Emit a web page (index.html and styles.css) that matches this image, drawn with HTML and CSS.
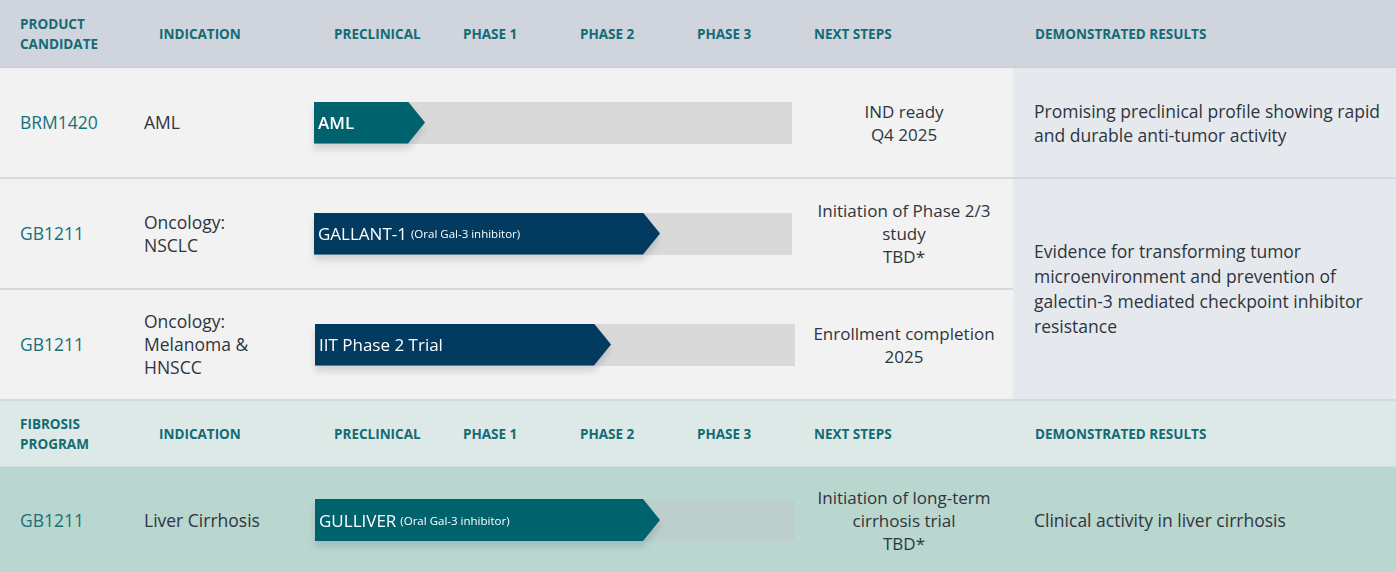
FILE: index.html
```html
<!DOCTYPE html>
<html lang="en">

<head>
    <meta charset="UTF-8">
    <meta name="viewport" content="width=device-width, initial-scale=1.0">
    <title>Pipeline</title>
    <link rel="stylesheet" href="styles.css">
</head>

<body>
    <!-- Oncology header -->
    <div class="head">
        <div class="h-product">PRODUCT<br>CANDIDATE</div>
        <div class="h-ind">INDICATION</div>
        <div class="h-pre">PRECLINICAL</div>
        <div class="h-ph">PHASE 1</div>
        <div class="h-ph">PHASE 2</div>
        <div class="h-ph">PHASE 3</div>
        <div class="h-next">NEXT STEPS</div>
        <div class="h-res">DEMONSTRATED RESULTS</div>
    </div>

    <div class="grid onc">
        <!-- BRM1420 -->
        <div class="cell product">BRM1420</div>
        <div class="cell ind">AML</div>
        <div class="cell bar">
            <div class="track">
                <div class="shadow">
                    <div class="arrow teal bold" style="width: 111px">AML</div>
                </div>
            </div>
        </div>
        <div class="cell next">IND ready<br>Q4 2025</div>
        <div class="cell res">Promising preclinical profile showing rapid and durable anti-tumor activity</div>

        <!-- GB1211 NSCLC -->
        <div class="cell product">GB1211</div>
        <div class="cell ind">Oncology:<br>NSCLC</div>
        <div class="cell bar">
            <div class="track">
                <div class="shadow">
                    <div class="arrow navy" style="width: 346px">GALLANT-1 <small>(Oral Gal-3 inhibitor)</small></div>
                </div>
            </div>
        </div>
        <div class="cell next">Initiation of Phase 2/3<br>study<br>TBD*</div>
        <div class="cell res span">Evidence for transforming tumor microenvironment and prevention of galectin-3 mediated checkpoint inhibitor resistance</div>

        <!-- GB1211 Melanoma -->
        <div class="cell product">GB1211</div>
        <div class="cell ind">Oncology:<br>Melanoma &amp;<br>HNSCC</div>
        <div class="cell bar">
            <div class="track shift">
                <div class="shadow">
                    <div class="arrow navy" style="width: 296px">IIT Phase 2 Trial</div>
                </div>
            </div>
        </div>
        <div class="cell next">Enrollment completion<br>2025</div>
    </div>

    <!-- Fibrosis header -->
    <div class="head fib">
        <div class="h-product">FIBROSIS<br>PROGRAM</div>
        <div class="h-ind">INDICATION</div>
        <div class="h-pre">PRECLINICAL</div>
        <div class="h-ph">PHASE 1</div>
        <div class="h-ph">PHASE 2</div>
        <div class="h-ph">PHASE 3</div>
        <div class="h-next">NEXT STEPS</div>
        <div class="h-res">DEMONSTRATED RESULTS</div>
    </div>

    <div class="grid fib-row">
        <div class="cell product">GB1211</div>
        <div class="cell ind">Liver Cirrhosis</div>
        <div class="cell bar">
            <div class="track shift green">
                <div class="shadow">
                    <div class="arrow teal" style="width: 345px">GULLIVER <small>(Oral Gal-3 inhibitor)</small></div>
                </div>
            </div>
        </div>
        <div class="cell next">Initiation of long-term<br>cirrhosis trial<br>TBD*</div>
        <div class="cell res">Clinical activity in liver cirrhosis</div>
    </div>
</body>

</html>
```

FILE: styles.css
```css
body {
    margin: 0;
    font-family: "Open Sans", Arial, sans-serif;
    color: #2e353d;
    background-color: #f2f2f2;
    width: 1396px;
    height: 572px;
    overflow: hidden;
}

/* header rows */
.head {
    display: flex;
    align-items: center;
    height: 67px;
    background-color: #d0d4dd;
    border-bottom: 1px solid #c7ccd5;
    color: #136b74;
    font-weight: bold;
    font-size: 13.5px;
    line-height: 20px;
}

.head.fib {
    height: 65px;
    background-color: #dde9e6;
    border-top: 2px solid #d5d9e0;
    border-bottom: 1px solid #cfdedb;
}

.h-product {
    width: 139px;
    padding-left: 20px;
}

.h-ind {
    width: 175px;
}

.h-pre {
    width: 129px;
}

.h-ph {
    width: 117px;
}

.h-next {
    width: 221px;
}

/* body grid */
.grid {
    display: grid;
    grid-template-columns: 144px 170px 481px 218px 1fr;
    font-size: 17.5px;
    line-height: 23px;
}

.onc {
    grid-template-rows: 109px 109px 109px;
    row-gap: 2px;
    background-color: #d5d9e0;
}

.fib-row {
    grid-template-rows: 106px;
    background-color: #b9d6cf;
}

.cell {
    display: flex;
    align-items: center;
    background-color: #f2f2f2;
}

.fib-row .cell {
    background-color: #b9d6cf;
}

.product {
    padding-left: 20px;
    color: #16707a;
}

.next {
    justify-content: center;
    text-align: center;
    font-size: 17px;
}

.res {
    background-color: #e5e9ee;
    padding-left: 21px;
    padding-right: 8px;
    line-height: 24px;
}

.res.span {
    grid-column: 5;
    grid-row: 2 / span 2;
    line-height: 25px;
}

.fib-row .res {
    background-color: #b9d6cf;
}

/* pipeline bars */
.track {
    width: 478px;
    height: 42px;
    background-color: #d9d9d9;
}

.track.shift {
    margin-left: 1px;
    width: 480px;
}

.track.green {
    background-color: #bdcfca;
}

.shadow {
    display: inline-block;
    filter: drop-shadow(0 6px 3px rgba(60, 80, 100, 0.18));
}

.arrow {
    height: 42px;
    display: flex;
    align-items: center;
    padding-left: 4px;
    box-sizing: border-box;
    color: white;
    font-size: 17px;
    white-space: nowrap;
    clip-path: polygon(0 0, calc(100% - 17px) 0, 100% 50%, calc(100% - 17px) 100%, 0 100%);
}

.arrow small {
    font-size: 11.5px;
    margin-left: 4px;
}

.arrow.bold {
    font-weight: 600;
}

.teal {
    background-color: #00626d;
}

.navy {
    background-color: #023a60;
}
```
